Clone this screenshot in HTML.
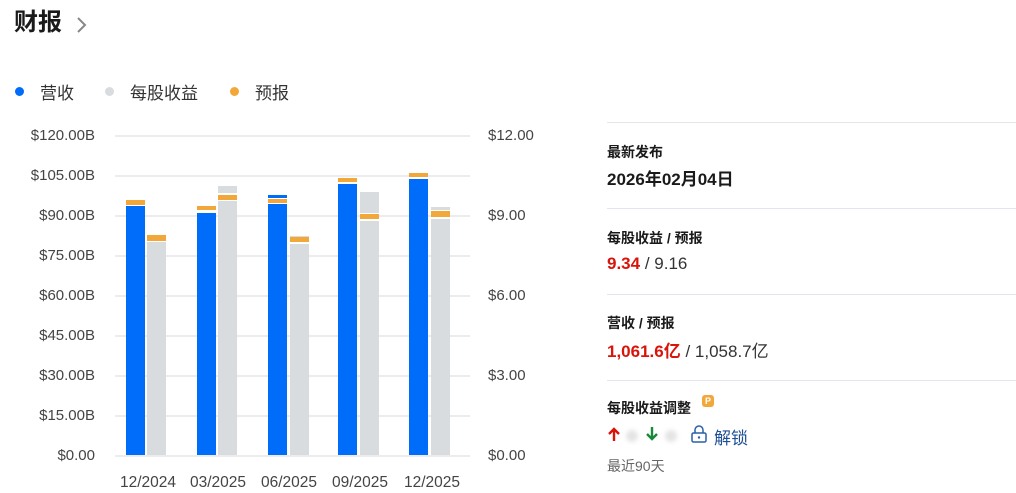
<!DOCTYPE html>
<html><head><meta charset="utf-8"><style>
*{margin:0;padding:0;box-sizing:border-box}
body{width:1016px;height:493px;background:#fff;position:relative;overflow:hidden;font-family:"Liberation Sans","Noto Sans CJK SC",sans-serif;color:#1a1a1a}
.a{position:absolute;white-space:nowrap}
.g{position:absolute;left:115px;width:355px;height:2px;background:#ececec}
.yl{position:absolute;font-size:15px;color:#444;line-height:16px}
.xl{position:absolute;font-size:15.5px;color:#444;top:474px}
.b{position:absolute;width:19px}
.bl{background:#006cfa}.gr{background:#d9dcde}.or{background:#f2a73b}
.hr{position:absolute;left:607px;width:409px;height:1px;background:#e3e7ec}
.lab{font-size:14px;font-weight:bold;color:#1a1a1a}
</style></head><body>
<div class="a" style="left:14px;top:7px;font-size:24px;font-weight:bold;line-height:32px">财报</div>
<svg class="a" style="left:76px;top:16px" width="12" height="18"><path d="M2 2l7 7-7 7" stroke="#888" stroke-width="2" fill="none"/></svg>
<div class="a" style="left:15px;top:87px;width:9px;height:9px;border-radius:50%;background:#006cfa"></div>
<div class="a" style="left:40px;top:79px;font-size:17px;color:#333">营收</div>
<div class="a" style="left:105px;top:87px;width:9px;height:9px;border-radius:50%;background:#d9dcde"></div>
<div class="a" style="left:130px;top:79px;font-size:17px;color:#333">每股收益</div>
<div class="a" style="left:230px;top:87px;width:9px;height:9px;border-radius:50%;background:#f2a73b"></div>
<div class="a" style="left:255px;top:79px;font-size:17px;color:#333">预报</div>

<div class="g" style="top:135px"></div><div class="g" style="top:175px"></div><div class="g" style="top:215px"></div><div class="g" style="top:255px"></div><div class="g" style="top:295px"></div><div class="g" style="top:335px"></div><div class="g" style="top:375px"></div><div class="g" style="top:415px"></div><div class="g" style="top:455px"></div>

<div class="yl" style="right:921px;top:128px">$120.00B</div>
<div class="yl" style="right:921px;top:168px">$105.00B</div>
<div class="yl" style="right:921px;top:208px">$90.00B</div>
<div class="yl" style="right:921px;top:248px">$75.00B</div>
<div class="yl" style="right:921px;top:288px">$60.00B</div>
<div class="yl" style="right:921px;top:328px">$45.00B</div>
<div class="yl" style="right:921px;top:368px">$30.00B</div>
<div class="yl" style="right:921px;top:408px">$15.00B</div>
<div class="yl" style="right:921px;top:448px">$0.00</div>
<div class="yl" style="left:488px;top:128px">$12.00</div>
<div class="yl" style="left:488px;top:208px">$9.00</div>
<div class="yl" style="left:488px;top:288px">$6.00</div>
<div class="yl" style="left:488px;top:368px">$3.00</div>
<div class="yl" style="left:488px;top:448px">$0.00</div>

<div class="b or" style="left:126px;top:200px;height:5px"></div>
<div class="b bl" style="left:126px;top:206px;height:249px"></div>
<div class="b or" style="left:147px;top:235px;height:6px"></div>
<div class="b gr" style="left:147px;top:242px;height:213px"></div>
<div class="b or" style="left:197px;top:206px;height:4px"></div>
<div class="b bl" style="left:197px;top:213px;height:242px"></div>
<div class="b gr" style="left:218px;top:186px;height:7px"></div>
<div class="b or" style="left:218px;top:195px;height:5px"></div>
<div class="b gr" style="left:218px;top:201px;height:254px"></div>
<div class="b bl" style="left:268px;top:195px;height:3px"></div>
<div class="b or" style="left:268px;top:199px;height:4px"></div>
<div class="b bl" style="left:268px;top:204px;height:251px"></div>
<div class="b gr" style="left:290px;top:236px;height:1px"></div>
<div class="b or" style="left:290px;top:237px;height:5px"></div>
<div class="b gr" style="left:290px;top:244px;height:211px"></div>
<div class="b or" style="left:338px;top:178px;height:4px"></div>
<div class="b bl" style="left:338px;top:184px;height:271px"></div>
<div class="b gr" style="left:360px;top:192px;height:21px"></div>
<div class="b or" style="left:360px;top:214px;height:5px"></div>
<div class="b gr" style="left:360px;top:221px;height:234px"></div>
<div class="b or" style="left:409px;top:173px;height:4px"></div>
<div class="b bl" style="left:409px;top:179px;height:276px"></div>
<div class="b gr" style="left:431px;top:207px;height:3px"></div>
<div class="b or" style="left:431px;top:211px;height:6px"></div>
<div class="b gr" style="left:431px;top:219px;height:236px"></div>

<div class="xl" style="left:120px">12/2024</div>
<div class="xl" style="left:190px">03/2025</div>
<div class="xl" style="left:261px">06/2025</div>
<div class="xl" style="left:332px">09/2025</div>
<div class="xl" style="left:404px">12/2025</div>

<div class="hr" style="top:122px"></div>
<div class="a lab" style="left:607px;top:142px">最新发布</div>
<div class="a" style="left:607px;top:165px;font-size:17px;font-weight:bold">2026年02月04日</div>
<div class="hr" style="top:208px"></div>
<div class="a lab" style="left:607px;top:228px">每股收益 / 预报</div>
<div class="a" style="left:607px;top:254px;font-size:17px;color:#333"><b style="color:#d9140b">9.34</b> / 9.16</div>
<div class="hr" style="top:294px"></div>
<div class="a lab" style="left:607px;top:313px">营收 / 预报</div>
<div class="a" style="left:607px;top:337px;font-size:17px;color:#333"><b style="color:#d9140b">1,061.6亿</b> / 1,058.7亿</div>
<div class="hr" style="top:380px"></div>
<div class="a lab" style="left:607px;top:398px">每股收益调整</div>
<div class="a" style="left:702px;top:395px;width:12px;height:12px;border-radius:3px;background:#f2a73b;color:#fff;font-size:9px;font-weight:bold;text-align:center;line-height:12px">P</div>
<svg class="a" style="left:607px;top:426px" width="14" height="16"><path d="M7 15V3M2 8l5-5 5 5" stroke="#d9140b" stroke-width="2.4" fill="none"/></svg>
<div class="a" style="left:626px;top:430px;width:12px;height:12px;border-radius:50%;background:#e4e4e4;filter:blur(2px)"></div>
<svg class="a" style="left:645px;top:426px" width="14" height="16"><path d="M7 1v12M2 8l5 5 5-5" stroke="#178a3a" stroke-width="2.4" fill="none"/></svg>
<div class="a" style="left:665px;top:430px;width:12px;height:12px;border-radius:50%;background:#e4e4e4;filter:blur(2px)"></div>
<svg class="a" style="left:690px;top:424px" width="18" height="20"><path d="M5 9V6a4 4 0 0 1 8 0v3" stroke="#2b5fa8" stroke-width="1.5" fill="none"/><rect x="2" y="9" width="14" height="9" rx="1.5" stroke="#2b5fa8" stroke-width="1.5" fill="none"/><circle cx="9" cy="13.5" r="1.2" fill="#2b5fa8"/></svg>
<div class="a" style="left:714px;top:424px;font-size:17px;color:#1f4f95">解锁</div>
<div class="a" style="left:607px;top:456px;font-size:14px;color:#666">最近90天</div>
</body></html>
